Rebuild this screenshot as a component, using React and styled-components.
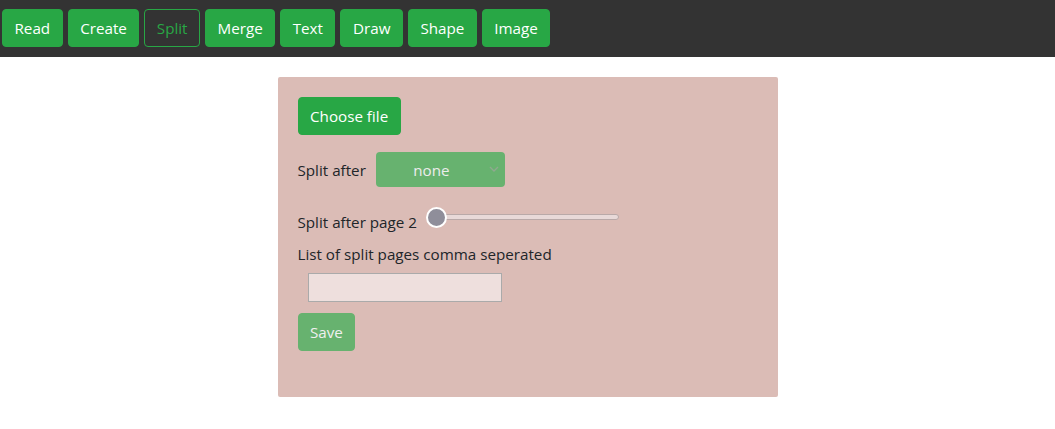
import React from "react";
import styled, { createGlobalStyle, css } from "styled-components";

const Global = createGlobalStyle`
  html, body { margin: 0; padding: 0; background: #fff; }
  body { font-family: "Open Sans", "Noto Sans", sans-serif; font-size: 15.2px; color: #212529; line-height: 24px; }
  * { box-sizing: border-box; }
`;

const NavBar = styled.nav`
  background: #333333;
  height: 57px;
  display: flex;
  align-items: flex-start;
  gap: 5px;
  padding: 9px 2px 0;
`;

const Btn = styled.button`
  font-family: inherit;
  font-size: 15.2px;
  line-height: 24px;
  padding: 6px 11.5px;
  border-radius: 4px;
  border: 1px solid #28a745;
  background: #28a745;
  color: #fff;
  cursor: pointer;
  ${(p) =>
    p.$outline &&
    css`
      background: transparent;
      color: #28a745;
    `}
  ${(p) =>
    p.$muted &&
    css`
      background: #67b26f;
      border-color: #67b26f;
      color: #f0f0f0;
    `}
`;

const Panel = styled.div`
  width: 500px;
  margin: 20px auto 0;
  background: #dbbcb6;
  border-radius: 2px;
  padding: 20px 20px 46px;
  display: flex;
  flex-direction: column;
  align-items: flex-start;
`;

const Row = styled.div`
  display: flex;
  align-items: ${(p) => p.$align || "center"};
  margin-top: ${(p) => p.$mt || 0}px;
`;

const Label = styled.span`
  color: #212529;
  margin-right: ${(p) => p.$mr || 0}px;
  margin-top: ${(p) => p.$mt || 0}px;
`;

const SelectBox = styled.div`
  position: relative;
  width: 129px;
  height: 35px;
  background: #67b26f;
  border-radius: 4px;
  color: #ececec;
  display: flex;
  align-items: center;
  justify-content: center;
  padding-right: 18px;
`;

const Chevron = styled.svg`
  position: absolute;
  right: 6px;
  top: 14px;
`;

const Slider = styled.div`
  position: relative;
  width: 193px;
  height: 21px;
  margin-left: 9px;
`;

const Track = styled.div`
  position: absolute;
  left: 2px;
  right: 0;
  top: 7px;
  height: 6px;
  border-radius: 3px;
  background: #e8d9d8;
  border: 1px solid #b9a9a8;
`;

const Thumb = styled.div`
  position: absolute;
  left: 0;
  top: 0;
  width: 21px;
  height: 21px;
  border-radius: 50%;
  background: #8f8e9a;
  border: 2px solid #fff;
`;

const TextInput = styled.input`
  width: 194px;
  height: 29px;
  margin: 7px 0 0 10px;
  background: #eedfdd;
  border: 1px solid #aaa;
  border-radius: 0;
  font-family: inherit;
  font-size: 15px;
`;

const tabs = ["Read", "Create", "Split", "Merge", "Text", "Draw", "Shape", "Image"];

export default function App() {
  return (
    <>
      <Global />
      <NavBar>
        {tabs.map((t) => (
          <Btn key={t} $outline={t === "Split"}>
            {t}
          </Btn>
        ))}
      </NavBar>
      <Panel>
        <Btn>Choose file</Btn>
        <Row $mt={17}>
          <Label $mr={10}>Split after</Label>
          <SelectBox>
            none
            <Chevron width="10" height="6" viewBox="0 0 10 6">
              <path d="M1 1l4 4 4-4" fill="none" stroke="#8fa98f" strokeWidth="1.4" />
            </Chevron>
          </SelectBox>
        </Row>
        <Row $mt={20} $align="flex-start">
          <Label $mt={3}>Split after page 2</Label>
          <Slider>
            <Track />
            <Thumb />
          </Slider>
        </Row>
        <Row $mt={8}>
          <Label>List of split pages comma seperated</Label>
        </Row>
        <TextInput />
        <Row $mt={11}>
          <Btn $muted>Save</Btn>
        </Row>
      </Panel>
    </>
  );
}
